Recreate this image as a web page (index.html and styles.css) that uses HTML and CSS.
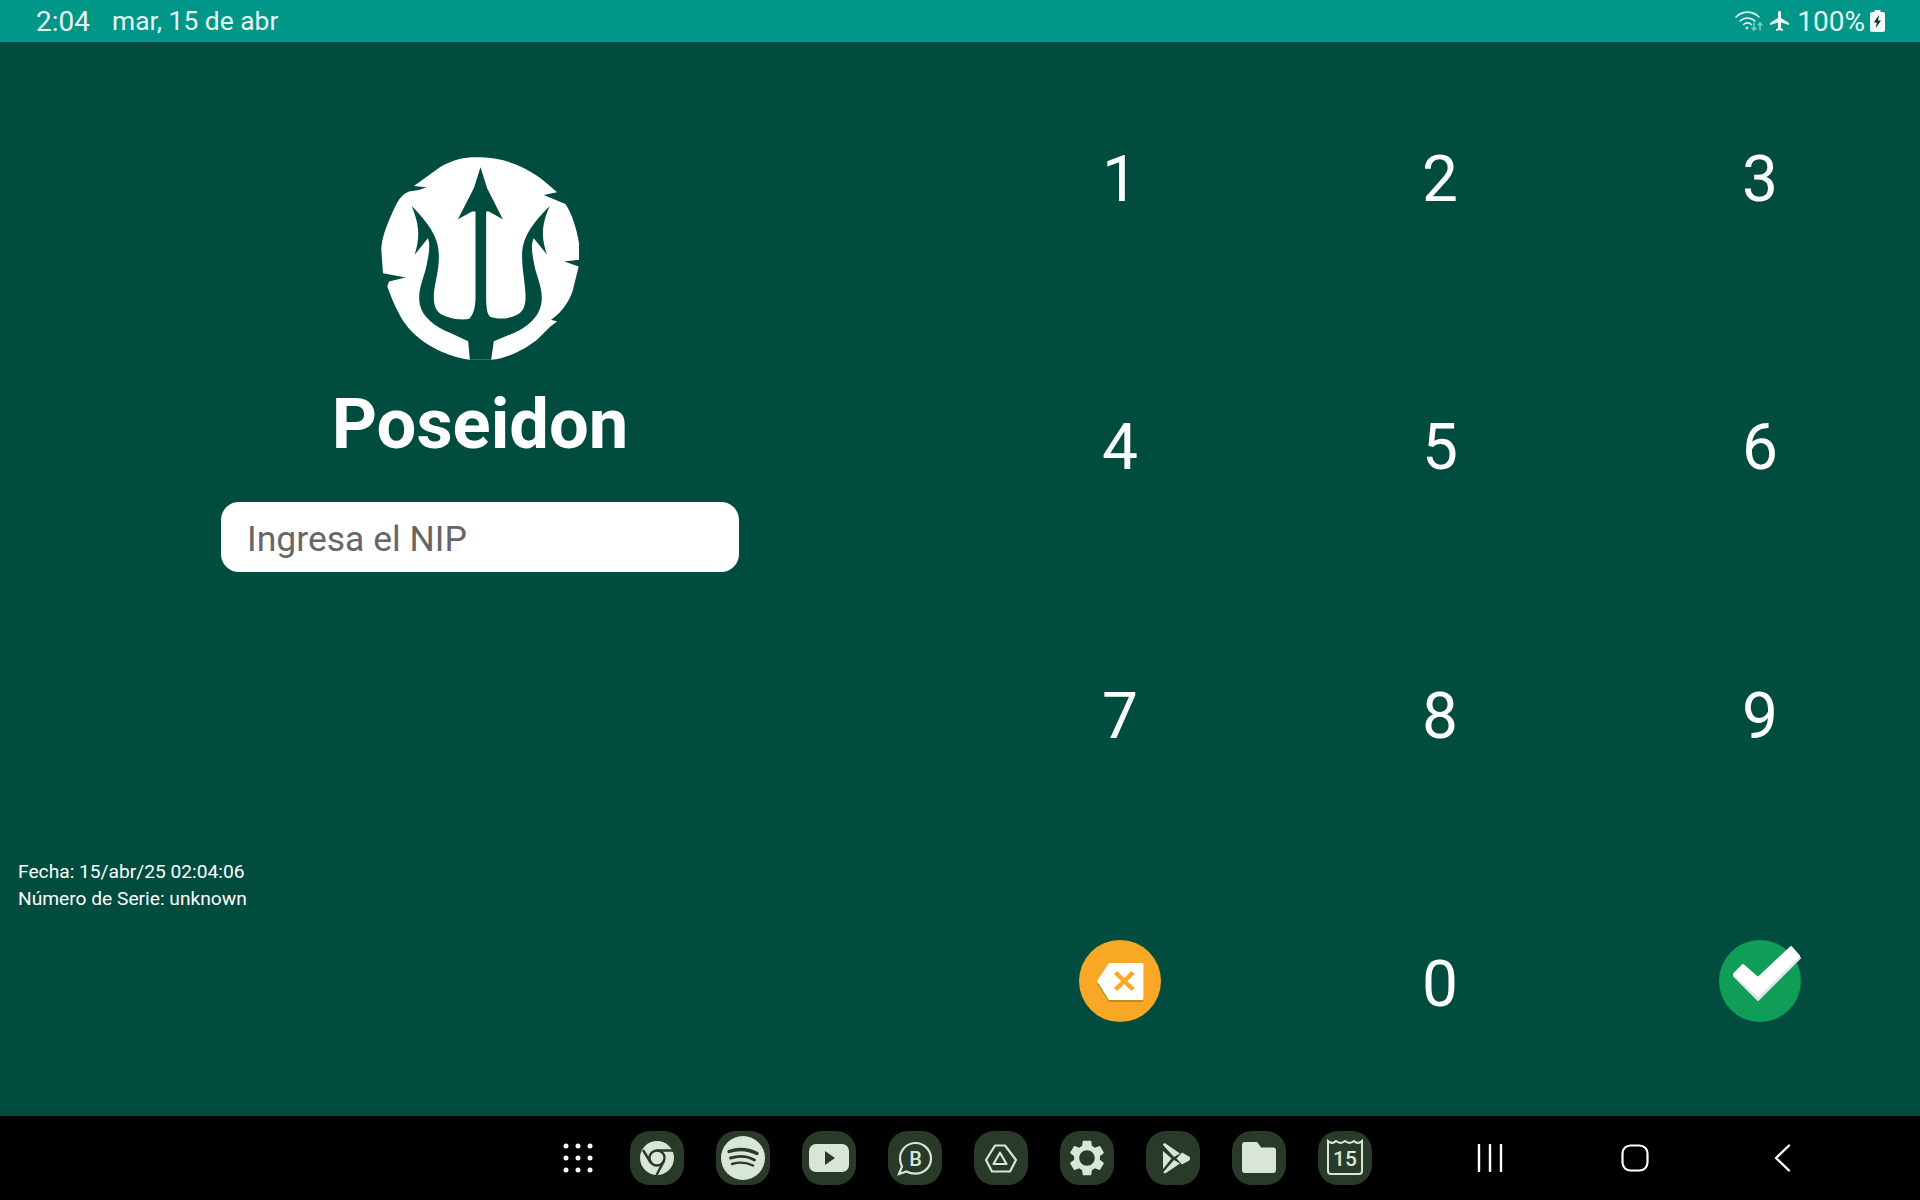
FILE: index.html
```html
<!DOCTYPE html>
<html lang="es">
<head>
  <meta charset="UTF-8">
  <title>Poseidon</title>
  <link rel="stylesheet" href="styles.css">
</head>
<body>
  <header class="status-bar">
    <span class="status-time">2:04</span>
    <span class="status-date">mar, 15 de abr</span>
    <div class="status-right">
      <svg class="status-wifi" viewBox="0 0 28 22" width="28" height="22" fill="none" stroke="#e6f5f2" stroke-width="1.6" stroke-linecap="round">
        <path d="M1 7c7-6.500 16-6.500 23 0"/>
        <path d="M5 11c4.500-4 10.500-4 15 0"/>
        <path d="M8.500 14.500c2.500-2 5.500-2 8 0"/>
        <circle cx="12" cy="18" r="1.300" fill="#e6f5f2" stroke="none"/>
        <path d="M19 13v7m-2-2 2 2 2-2M25 20v-7m-2 2 2-2 2 2" stroke="#7fcabf"/>
      </svg>
      <svg class="status-plane" viewBox="0 0 24 24" width="24" height="24" fill="#f2faf8">
        <path d="M21 16v-2l-8-5V3.500c0-.83-.67-1.500-1.500-1.500S10 2.670 10 3.500V9l-8 5v2l8-2.500V19l-2 1.500V22l3.500-1 3.500 1v-1.500L13 19v-5.500l8 2.500z"/>
      </svg>
      <span class="status-battery-text">100%</span>
      <svg class="status-battery" viewBox="0 0 15 22" width="15" height="22">
        <path d="M4.500 0h6v2h2.500a2 2 0 0 1 2 2v16a2 2 0 0 1-2 2H2a2 2 0 0 1-2-2V4a2 2 0 0 1 2-2h2.500z" fill="#f2faf8"/>
        <path d="M9 5 3.800 12.500h3L5.800 18 11 10.500H8z" fill="#12332e"/>
      </svg>
    </div>
  </header>

  <main class="app">
    <section class="login">
      <svg class="logo" viewBox="100 60 640 640" width="213" height="213">
        <path fill="#fff" d="M420 82C380 80 345 85 300 110L220 168 258 172 235 180 205 185C180 195 170 215 150 260 135 295 122 330 122 360L127 430 195 443 145 455 140 470C150 500 175 560 200 590 235 635 310 680 388 690H452C510 685 565 650 590 630L630 590 650 575 632 570C670 545 695 500 700 470L715 410 672 395 716 390V340C710 300 695 250 675 222L610 195 650 187C610 150 540 85 420 82z"/>
        <path fill="#004d40" d="M420 112 440 175 487 268 445 245H437V500C437 535 440 555 450 562 470 568 500 570 530 555 550 545 557 525 555 490 553 450 545 420 545 380 545 340 555 300 628 228 605 280 600 320 620 375L580 325C570 345 575 375 585 420 595 455 610 490 602 525 595 560 565 590 520 610L460 635 452 690H388L383 635 330 610C280 590 245 560 238 525 230 490 245 455 255 420 265 375 270 345 262 325L222 375C240 320 235 280 213 228 285 300 295 340 295 380 295 420 285 450 280 490 278 525 285 545 305 555 335 570 365 570 385 568 398 555 405 535 405 500V245H395L352 268 400 175z"/>
      </svg>
      <h1 class="brand">Poseidon</h1>
      <input class="nip-input" type="text" placeholder="Ingresa el NIP">
      <div class="device-info">
        <div>Fecha: 15/abr/25 02:04:06</div>
        <div>Número de Serie: unknown</div>
      </div>
    </section>

    <section class="keypad">
      <button class="key">1</button>
      <button class="key">2</button>
      <button class="key">3</button>
      <button class="key">4</button>
      <button class="key">5</button>
      <button class="key">6</button>
      <button class="key">7</button>
      <button class="key">8</button>
      <button class="key">9</button>
      <button class="key key-icon">
        <svg viewBox="0 0 82 82" width="82" height="82">
          <circle cx="41" cy="41" r="41" fill="#f9a825"/>
          <path d="M30 26h33a1.500 1.500 0 0 1 1.500 1.500V60.500A1.500 1.500 0 0 1 63 62H30L18 44z" fill="#c98a1c"/>
          <path d="M30 23h33a1.500 1.500 0 0 1 1.500 1.500V58.500A1.500 1.500 0 0 1 63 60H30L18 41z" fill="#fff"/>
          <path d="M36.500 32.500 54 49.500M54 32.500 36.500 49.500" stroke="#f9a825" stroke-width="4.500"/>
        </svg>
      </button>
      <button class="key">0</button>
      <button class="key key-icon">
        <svg class="check-icon" viewBox="0 0 82 82" width="82" height="82">
          <circle cx="41" cy="41" r="41" fill="#0f9d58"/>
          <path d="M15 36 25 26 39 40 72 9 81 18 39 60z" fill="#e2e2e2" stroke="#e2e2e2" stroke-width="2" stroke-linejoin="round"/>
          <path d="M15 34 24 25 39 38 72 7 80 16 39 56z" fill="#fff" stroke="#fff" stroke-width="2" stroke-linejoin="round"/>
        </svg>
      </button>
    </section>
  </main>

  <footer class="nav-bar">
    <svg class="apps-grid" viewBox="0 0 30 30" width="30" height="30" fill="#fff">
      <circle cx="3" cy="3" r="2.500"/><circle cx="15" cy="3" r="2.500"/><circle cx="27" cy="3" r="2.500"/>
      <circle cx="3" cy="15" r="2.500"/><circle cx="15" cy="15" r="2.500"/><circle cx="27" cy="15" r="2.500"/>
      <circle cx="3" cy="27" r="2.500"/><circle cx="15" cy="27" r="2.500"/><circle cx="27" cy="27" r="2.500"/>
    </svg>

    <div class="dock">
      <div class="dock-icon">
        <svg viewBox="0 0 54 54" width="54" height="54">
          <circle cx="27" cy="27" r="17" fill="#d8e6d9"/>
          <circle cx="27" cy="27" r="7.500" fill="none" stroke="#2a3a28" stroke-width="2.400"/>
          <path d="M27 19.500h16M34 30 26.500 44M21 32 13 19" stroke="#2a3a28" stroke-width="2.400"/>
        </svg>
      </div>
      <div class="dock-icon">
        <svg viewBox="0 0 54 54" width="54" height="54" fill="none">
          <circle cx="27" cy="27" r="22" fill="#d8e6d9"/>
          <g stroke="#2a3a28" stroke-linecap="round">
            <path d="M13 20.500c9-3 19-2.500 28 2" stroke-width="3.400"/>
            <path d="M14.500 27c8-2.500 17-2 24 2" stroke-width="2.900"/>
            <path d="M16 33c7-2 15-1.500 21 1.500" stroke-width="2.400"/>
          </g>
        </svg>
      </div>
      <div class="dock-icon">
        <svg viewBox="0 0 54 54" width="54" height="54">
          <rect x="7" y="13" width="40" height="28" rx="7" fill="#d8e6d9"/>
          <path d="M23 20 33 27 23 34z" fill="#2a3a28"/>
        </svg>
      </div>
      <div class="dock-icon">
        <svg viewBox="0 0 54 54" width="54" height="54" fill="none" stroke="#d8e6d9" stroke-width="2.200">
          <path d="M27.500 12C19 12 12 18.800 12 27.500c0 3 .8 5.600 2 8L11 43l7.500-2.500c2.700 1.500 5.600 2.200 9 2.200 8.600 0 15.500-6.800 15.500-15.200S36 12 27.500 12z"/>
          <text class="dock-b" x="27.500" y="34.500" text-anchor="middle">B</text>
        </svg>
      </div>
      <div class="dock-icon">
        <svg viewBox="0 0 54 54" width="54" height="54" fill="none" stroke="#d8e6d9" stroke-linejoin="round" stroke-width="2.200">
          <path d="M21 14.500h10L42 29l-6 11.500H18L12 29z"/>
          <path d="M26 21.700 32.500 33h-13z"/>
        </svg>
      </div>
      <div class="dock-icon">
        <svg viewBox="-3 -3 30 30" width="54" height="54" fill="#d8e6d9">
          <path d="M19.140 12.940c.04-.3.06-.61.06-.94 0-.32-.02-.64-.07-.94l2.030-1.580c.18-.14.23-.41.12-.61l-1.920-3.320c-.12-.22-.37-.29-.59-.22l-2.390.96c-.5-.38-1.030-.7-1.620-.94l-.36-2.540c-.04-.24-.24-.41-.48-.41h-3.840c-.24 0-.43.17-.47.41l-.36 2.540c-.59.24-1.130.57-1.620.94l-2.390-.96c-.22-.08-.47 0-.59.22L2.740 8.870c-.12.21-.08.47.12.61l2.030 1.580c-.05.3-.09.63-.09.94s.02.64.07.94l-2.030 1.580c-.18.14-.23.41-.12.61l1.920 3.320c.12.22.37.29.59.22l2.390-.96c.5.38 1.030.7 1.620.94l.36 2.540c.05.24.24.41.48.41h3.840c.24 0 .44-.17.47-.41l.36-2.540c.59-.24 1.130-.56 1.620-.94l2.390.96c.22.08.47 0 .59-.22l1.920-3.320c.12-.22.07-.47-.12-.61l-2.010-1.580zM12 16.300c-2.370 0-4.300-1.930-4.300-4.300s1.930-4.300 4.300-4.300 4.300 1.930 4.300 4.300-1.930 4.300-4.300 4.300z"/>
        </svg>
      </div>
      <div class="dock-icon">
        <svg viewBox="0 0 54 54" width="54" height="54" fill="#d8e6d9">
          <path d="M17 14c0-1.700 1.500-2 2.500-1.500L34 22.500 28 26z"/>
          <path d="M17 20 25.500 27.500 17 38z"/>
          <path d="M36 21.500 43 25.500c1.500 1 1.500 3 0 4L36 33.500 30.500 27.500z"/>
          <path d="M17.500 41 28 29 34 32.500 20 42c-1.500.7-2.500 0-2.500-1z"/>
        </svg>
      </div>
      <div class="dock-icon">
        <svg viewBox="0 0 54 54" width="54" height="54" fill="#d8e6d9">
          <path d="M13 11h11c1 0 1.500.5 2 1l3 4.500h12a3 3 0 0 1 3 3V39a3 3 0 0 1-3 3H13a3 3 0 0 1-3-3V14a3 3 0 0 1 3-3z"/>
        </svg>
      </div>
      <div class="dock-icon">
        <svg viewBox="0 0 54 54" width="54" height="54" fill="none" stroke="#d8e6d9" stroke-width="2">
          <path d="M10 10c2.800 2.500 5.500 2.500 8 0 3 2.500 6 2.500 9 0 3 2.500 6 2.500 9 0 2.500 2.500 5.200 2.500 8 0v30a3 3 0 0 1-3 3H13a3 3 0 0 1-3-3z"/>
          <text class="dock-cal" x="27" y="34.500" text-anchor="middle">15</text>
        </svg>
      </div>
    </div>

    <div class="nav-buttons">
      <svg class="nav-recents" viewBox="0 0 26 28" width="26" height="28" stroke="#fff" stroke-width="2.400" stroke-linecap="round">
        <path d="M2 1v26M13 1v26M24 1v26"/>
      </svg>
      <svg class="nav-home" viewBox="0 0 28 28" width="28" height="28" fill="none" stroke="#fff" stroke-width="2.200">
        <rect x="1.500" y="1.500" width="25" height="25" rx="8"/>
      </svg>
      <svg class="nav-back" viewBox="0 0 17 28" width="17" height="28" fill="none" stroke="#fff" stroke-width="2.400" stroke-linecap="round" stroke-linejoin="round">
        <path d="M15 1.500 2 14l13 12.500"/>
      </svg>
    </div>
  </footer>
</body>
</html>
```

FILE: styles.css
```css
* {
  box-sizing: border-box;
}

body {
  margin: 0;
  height: 1200px;
  display: flex;
  flex-direction: column;
  font-family: Roboto, sans-serif;
  background: #004d40;
  overflow: hidden;
}

.status-bar {
  height: 42px;
  display: flex;
  align-items: center;
  padding: 0 35px 0 36px;
  background: #009688;
  color: #e6f5f2;
  font-size: 28px;
}

.status-date {
  margin-left: 22px;
  font-size: 26.4px;
}

.status-right {
  margin-left: auto;
  display: flex;
  align-items: center;
  gap: 5px;
}

.app {
  flex: 1;
  display: flex;
}

.login {
  width: 960px;
  padding-top: 108px;
  display: flex;
  flex-direction: column;
  align-items: center;
  box-shadow: inset -1px 0 #004a3d;
}

.logo {
  display: block;
}

.brand {
  margin: 23px 0 0;
  font-size: 70.5px;
  line-height: 76px;
  font-weight: 700;
  color: #fff;
}

.nip-input {
  width: 518px;
  height: 70px;
  margin-top: 40px;
  padding: 3px 26px 0;
  border: none;
  border-radius: 18px;
  background: #fff;
  font-family: Roboto, sans-serif;
  font-size: 35.5px;
  outline: none;
}

.nip-input::placeholder {
  color: #666;
  opacity: 1;
}

.device-info {
  align-self: flex-start;
  margin-top: 286px;
  padding-left: 18px;
  color: #fff;
  font-size: 19.2px;
  line-height: 27px;
}

.keypad {
  flex: 1;
  display: grid;
  grid-template-columns: repeat(3, 1fr);
  grid-template-rows: repeat(4, 1fr);
}

.key {
  display: flex;
  align-items: center;
  justify-content: center;
  padding: 6px 0 0;
  border: none;
  background: none;
  color: #fff;
  font-family: Roboto, sans-serif;
  font-size: 64px;
  cursor: pointer;
}

.key-icon {
  padding: 0 0 1px;
}

.key svg {
  display: block;
}

.check-icon {
  overflow: visible;
}

.nav-bar {
  height: 84px;
  display: flex;
  align-items: center;
  padding-left: 563px;
  background: #000;
}

.dock {
  display: flex;
  gap: 32px;
  margin-left: 37px;
}

.dock-icon {
  width: 54px;
  height: 54px;
  border-radius: 20px;
  background: #2a3a28;
}

.dock-icon svg {
  display: block;
}

.dock-b {
  font-family: Roboto, sans-serif;
  font-size: 20px;
  font-weight: 500;
  fill: #d8e6d9;
  stroke: none;
}

.dock-cal {
  font-family: Roboto, sans-serif;
  font-size: 21px;
  font-weight: 500;
  fill: #d8e6d9;
  stroke: none;
}

.nav-buttons {
  display: flex;
  align-items: center;
  margin-left: 105px;
}

.nav-home {
  margin-left: 118px;
}

.nav-back {
  margin-left: 125px;
}
```
